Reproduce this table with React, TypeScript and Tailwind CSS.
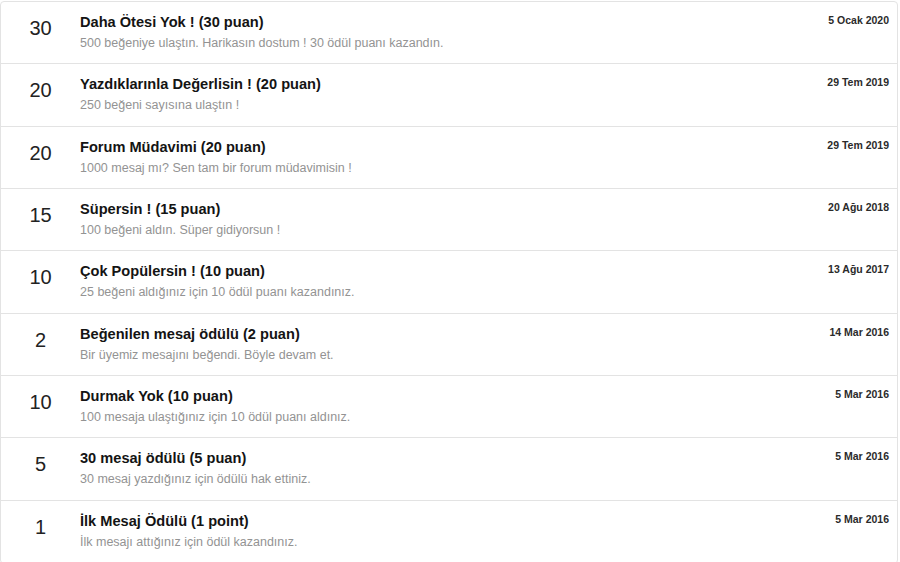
const awards = [
  { pts: 30, title: 'Daha Ötesi Yok ! (30 puan)', desc: '500 beğeniye ulaştın. Harikasın dostum ! 30 ödül puanı kazandın.', date: '5 Ocak 2020' },
  { pts: 20, title: 'Yazdıklarınla Değerlisin ! (20 puan)', desc: '250 beğeni sayısına ulaştın !', date: '29 Tem 2019' },
  { pts: 20, title: 'Forum Müdavimi (20 puan)', desc: '1000 mesaj mı? Sen tam bir forum müdavimisin !', date: '29 Tem 2019' },
  { pts: 15, title: 'Süpersin ! (15 puan)', desc: '100 beğeni aldın. Süper gidiyorsun !', date: '20 Ağu 2018' },
  { pts: 10, title: 'Çok Popülersin ! (10 puan)', desc: '25 beğeni aldığınız için 10 ödül puanı kazandınız.', date: '13 Ağu 2017' },
  { pts: 2, title: 'Beğenilen mesaj ödülü (2 puan)', desc: 'Bir üyemiz mesajını beğendi. Böyle devam et.', date: '14 Mar 2016' },
  { pts: 10, title: 'Durmak Yok (10 puan)', desc: '100 mesaja ulaştığınız için 10 ödül puanı aldınız.', date: '5 Mar 2016' },
  { pts: 5, title: '30 mesaj ödülü (5 puan)', desc: '30 mesaj yazdığınız için ödülü hak ettiniz.', date: '5 Mar 2016' },
  { pts: 1, title: 'İlk Mesaj Ödülü (1 point)', desc: 'İlk mesajı attığınız için ödül kazandınız.', date: '5 Mar 2016' },
]

const AwardRow = ({ award }) => (
  <li className="flex h-[62.33px] border-b border-[#e3e3e3] last:border-b-0">
    <div className="w-[79px] shrink-0 pt-[12px] text-center text-[20px] leading-[28px] text-[#222]">
      {award.pts}
    </div>
    <div className="flex-1 pt-[10px]">
      <div className="text-[14.6px] leading-[20px] font-bold text-[#141414]">{award.title}</div>
      <div className="mt-[2px] text-[12.5px] leading-[18px] text-[#939393]">{award.desc}</div>
    </div>
    <div className="pt-[10px] pr-[8px] text-[10.5px] leading-[16px] font-bold text-[#2b2b2b]">
      {award.date}
    </div>
  </li>
)

export default function App() {
  return (
    <div className="h-[562px] w-[900px] overflow-hidden bg-white pt-px font-['Liberation_Sans',Arial,sans-serif]">
      <ul className="w-[898px] rounded-[4px] border border-[#e3e3e3] bg-white">
        {awards.map((a, i) => (
          <AwardRow key={i} award={a} />
        ))}
      </ul>
    </div>
  )
}
